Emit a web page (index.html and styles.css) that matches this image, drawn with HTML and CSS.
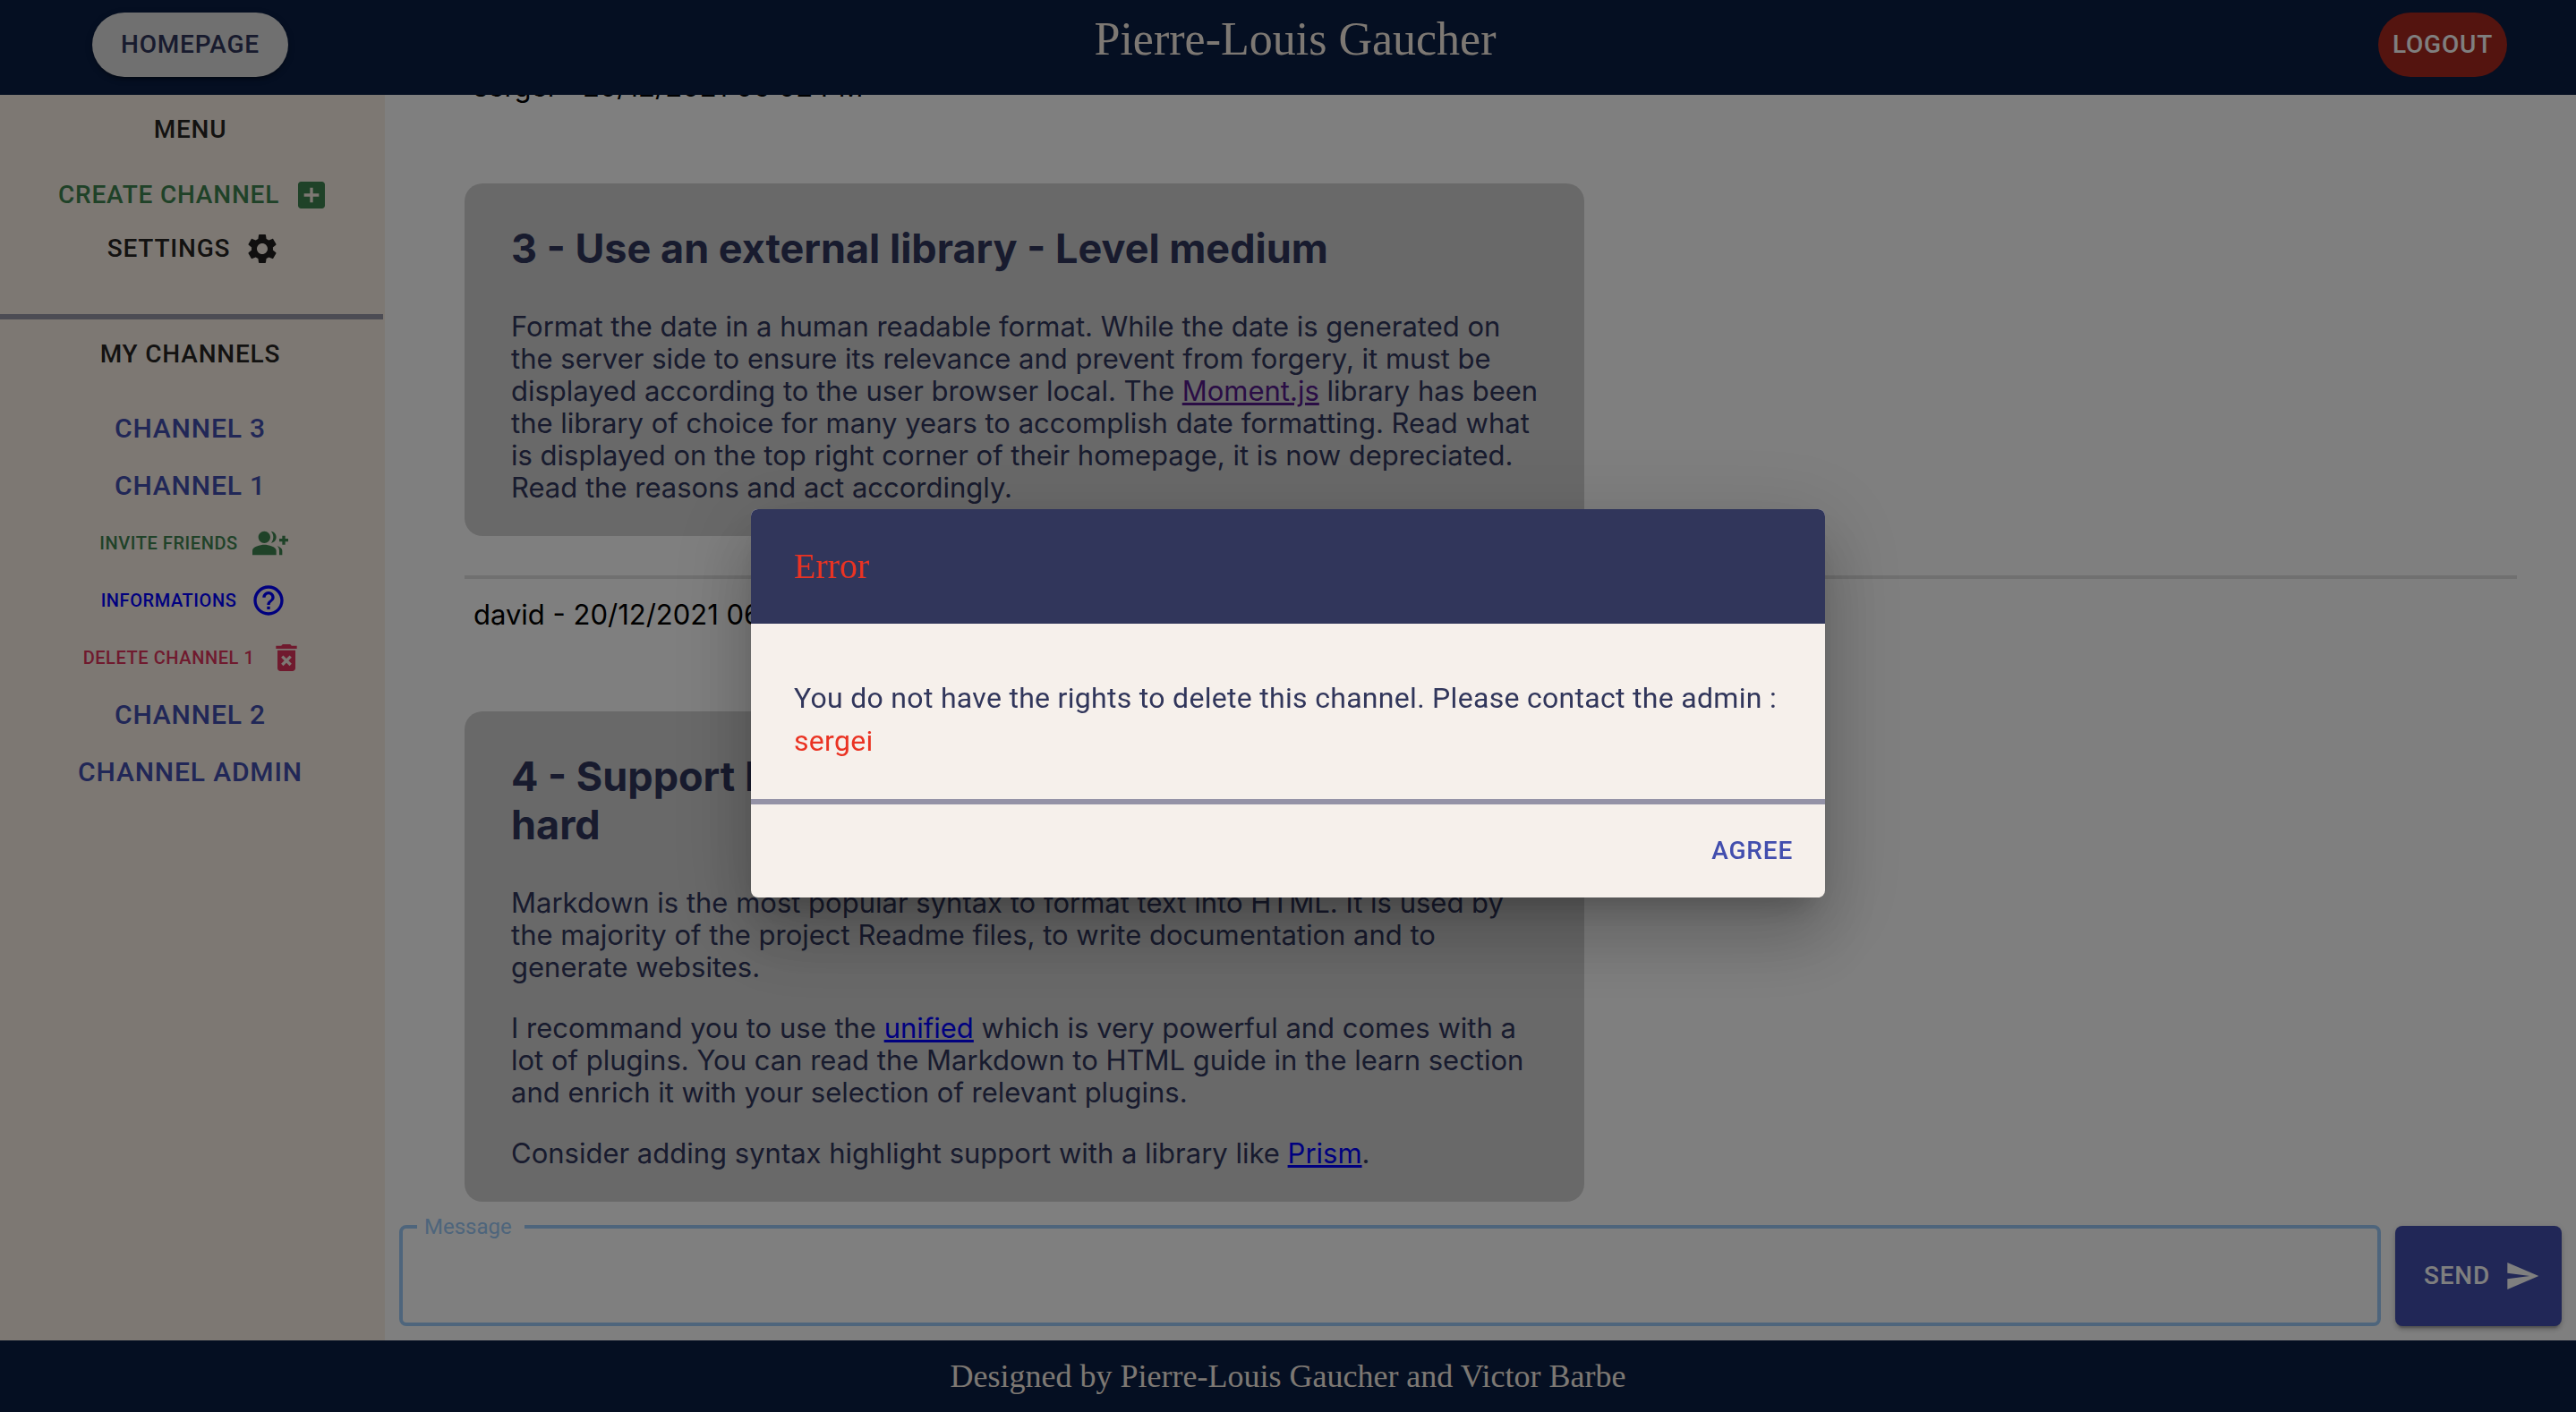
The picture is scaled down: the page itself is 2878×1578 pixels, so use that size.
FILE: index.html
```html
<!DOCTYPE html>
<html lang="en">
<head>
<meta charset="utf-8">
<meta name="viewport" content="width=device-width, initial-scale=1">
<title>Channels</title>
<link rel="stylesheet" href="styles.css">
</head>
<body>
<div class="app">
  <header class="header">
    <button class="btn btn-home" type="button">Homepage</button>
    <h1 class="title">Pierre-Louis Gaucher</h1>
    <button class="btn btn-logout" type="button">Logout</button>
  </header>

  <div class="body">
    <nav class="sidebar">
      <section class="menu">
        <h2 class="side-title">Menu</h2>
        <button class="btn item create" type="button">Create channel
          <svg class="icon" viewBox="0 0 24 24"><path d="M19 3H5c-1.11 0-2 .9-2 2v14c0 1.1.89 2 2 2h14c1.1 0 2-.9 2-2V5c0-1.1-.9-2-2-2zm-2 10h-4v4h-2v-4H7v-2h4V7h2v4h4v2z"/></svg>
        </button>
        <button class="btn item" type="button">Settings
          <svg class="icon" viewBox="0 0 24 24"><path d="M19.14 12.94c.04-.3.06-.61.06-.94 0-.32-.02-.64-.07-.94l2.03-1.58c.18-.14.23-.41.12-.61l-1.92-3.32c-.12-.22-.37-.29-.59-.22l-2.39.96c-.5-.38-1.03-.7-1.62-.94l-.36-2.54c-.04-.24-.24-.41-.48-.41h-3.84c-.24 0-.43.17-.47.41l-.36 2.54c-.59.24-1.13.57-1.62.94l-2.39-.96c-.22-.08-.47 0-.59.22L2.74 8.87c-.12.21-.08.47.12.61l2.03 1.58c-.05.3-.09.63-.09.94s.02.64.07.94l-2.03 1.58c-.18.14-.23.41-.12.61l1.92 3.32c.12.22.37.29.59.22l2.39-.96c.5.38 1.03.7 1.62.94l.36 2.54c.05.24.24.41.48.41h3.84c.24 0 .44-.17.47-.41l.36-2.54c.59-.24 1.13-.56 1.62-.94l2.39.96c.22.08.47 0 .59-.22l1.92-3.32c.12-.22.07-.47-.12-.61l-2.01-1.58zM12 15.6c-1.98 0-3.6-1.62-3.6-3.6s1.62-3.6 3.6-3.6 3.6 1.62 3.6 3.6-1.62 3.6-3.6 3.6z"/></svg>
        </button>
      </section>
      <section class="channels">
        <h2 class="side-title">My channels</h2>
        <ul class="channel-list">
          <li><a class="channel" href="#channel-3">Channel 3</a></li>
          <li><a class="channel" href="#channel-1">Channel 1</a></li>
          <li><button class="btn action invite" type="button">Invite friends
            <svg class="icon" viewBox="0 0 24 24"><path d="M22 9V7h-2v2h-2v2h2v2h2v-2h2V9zM8 12c2.21 0 4-1.79 4-4s-1.79-4-4-4-4 1.79-4 4 1.79 4 4 4zm0 1c-2.67 0-8 1.34-8 4v3h16v-3c0-2.66-5.33-4-8-4zm4.51-8.95C13.43 5.11 14 6.49 14 8s-.57 2.89-1.49 3.95C14.47 11.7 16 10.04 16 8s-1.53-3.7-3.49-3.95zm4.02 9.78C17.42 14.66 18 15.7 18 17v3h2v-3c0-1.45-1.59-2.51-3.47-3.17z"/></svg>
          </button></li>
          <li><button class="btn action info" type="button">Informations
            <svg class="icon" viewBox="0 0 24 24"><path d="M11 18h2v-2h-2v2zm1-16C6.48 2 2 6.48 2 12s4.48 10 10 10 10-4.48 10-10S17.52 2 12 2zm0 18c-4.41 0-8-3.59-8-8s3.59-8 8-8 8 3.59 8 8-3.59 8-8 8zm0-14c-2.21 0-4 1.79-4 4h2c0-1.1.9-2 2-2s2 .9 2 2c0 2-3 1.75-3 5h2c0-2.25 3-2.5 3-5 0-2.21-1.79-4-4-4z"/></svg>
          </button></li>
          <li><button class="btn action delete" type="button">Delete Channel 1
            <svg class="icon" viewBox="0 0 24 24"><path d="M6 19c0 1.1.9 2 2 2h8c1.1 0 2-.9 2-2V7H6v12zm2.46-7.12 1.41-1.41L12 12.59l2.12-2.12 1.41 1.41L13.41 14l2.12 2.12-1.41 1.41L12 15.41l-2.12 2.12-1.41-1.41L10.59 14l-2.13-2.12zM15.5 4l-1-1h-5l-1 1H5v2h14V4z"/></svg>
          </button></li>
          <li><a class="channel" href="#channel-2">Channel 2</a></li>
          <li><a class="channel" href="#channel-admin">Channel admin</a></li>
        </ul>
      </section>
    </nav>

    <main class="main">
      <div class="messages">
        <article class="message">
          <p class="author">sergei - 20/12/2021 06:02 PM</p>
          <div class="card">
            <h2>3 - Use an external library - Level medium</h2>
            <p>Format the date in a human readable format. While the date is generated on the server side to ensure its relevance and prevent from forgery, it must be displayed according to the user browser local. The <a class="visited" href="#moment">Moment.js</a> library has been the library of choice for many years to accomplish date formatting. Read what is displayed on the top right corner of their homepage, it is now depreciated. Read the reasons and act accordingly.</p>
          </div>
        </article>
        <article class="message">
          <p class="author">david - 20/12/2021 06:02 PM</p>
          <div class="card">
            <h2>4 - Support Markdown syntax in messages - Level hard</h2>
            <p>Markdown is the most popular syntax to format text into HTML. It is used by the majority of the project Readme files, to write documentation and to generate websites.</p>
            <p>I recommand you to use the <a href="#unified">unified</a> which is very powerful and comes with a lot of plugins. You can read the Markdown to HTML guide in the learn section and enrich it with your selection of relevant plugins.</p>
            <p>Consider adding syntax highlight support with a library like <a href="#prism">Prism</a>.</p>
          </div>
        </article>
      </div>
      <form class="composer">
        <fieldset class="field">
          <legend><label for="message">Message</label></legend>
          <textarea id="message"></textarea>
        </fieldset>
        <button class="btn btn-send" type="button">Send
          <svg class="icon" viewBox="0 0 24 24"><path d="M2.01 21 23 12 2.01 3 2 10l15 2-15 2z"/></svg>
        </button>
      </form>
    </main>
  </div>

  <footer class="footer">Designed by Pierre-Louis Gaucher and Victor Barbe</footer>
</div>

<div class="backdrop">
  <div class="dialog" role="alertdialog" aria-modal="true" aria-labelledby="dialog-title" aria-describedby="dialog-text">
    <h2 class="dialog-title" id="dialog-title">Error</h2>
    <p class="dialog-text" id="dialog-text">You do not have the rights to delete this channel. Please contact the admin : <span class="admin">sergei</span></p>
    <div class="dialog-actions">
      <button class="btn btn-agree" type="button">Agree</button>
    </div>
  </div>
</div>
</body>
</html>
```
FILE: styles.css
```css
* {
  box-sizing: border-box;
}

html,
body {
  height: 100%;
  margin: 0;
}

body {
  font-family: Inter, "Liberation Sans", sans-serif;
  font-size: 31px;
  line-height: 36px;
  color: #000;
  background: #fff;
}

h1,
h2,
p,
ul {
  margin: 0;
  padding: 0;
}

.app {
  display: flex;
  flex-direction: column;
  height: 100vh;
}

/* Buttons */
.btn {
  display: inline-flex;
  align-items: center;
  justify-content: center;
  margin: 0;
  border: 0;
  padding: 12px 16px;
  background: none;
  color: rgba(0, 0, 0, 0.87);
  font-family: Roboto, sans-serif;
  font-size: 28px;
  font-weight: 500;
  line-height: 48px;
  letter-spacing: 0.02857em;
  text-transform: uppercase;
  cursor: pointer;
}

.icon {
  width: 40px;
  height: 40px;
  margin: 0 -8px 0 16px;
  fill: currentColor;
}

/* Header and footer */
.header {
  display: grid;
  grid-template-columns: 1fr auto 1fr;
  align-items: start;
  flex: none;
  height: 106px;
  padding: 14px 77px 0 103px;
  background: #0a1e44;
}

.btn-home {
  justify-self: start;
  padding: 12px 32px;
  border-radius: 36px;
  background: #e0e0e0;
  color: #30365c;
  box-shadow: 0 6px 2px -4px rgba(0, 0, 0, 0.2), 0 4px 4px rgba(0, 0, 0, 0.14), 0 2px 10px rgba(0, 0, 0, 0.12);
}

.btn-logout {
  justify-self: end;
  border-radius: 36px;
  background: #a8281e;
  color: #fff;
}

.title {
  padding-right: 10px;
  color: #faf0e6;
  font-family: "Liberation Serif", serif;
  font-size: 52px;
  font-weight: 400;
  line-height: 60px;
}

.footer {
  flex: none;
  padding: 20px 0;
  background: #0a1e44;
  color: #faf0e6;
  font-family: "Liberation Serif", serif;
  font-size: 36px;
  line-height: 40px;
  text-align: center;
}

.body {
  display: flex;
  flex: 1;
  min-height: 0;
}

/* Sidebar */
.sidebar {
  flex: none;
  width: 430px;
  background: #faf0e6;
}

.menu,
.channels {
  display: flex;
  flex-direction: column;
  align-items: center;
  width: 428px;
  padding: 15px 3px 0 0;
}

.menu {
  height: 251px;
  border-bottom: 6px solid #9898a8;
}

.side-title {
  color: rgba(0, 0, 0, 0.87);
  font-family: Roboto, sans-serif;
  font-size: 28px;
  font-weight: 500;
  line-height: 48px;
  letter-spacing: 0.02857em;
  text-transform: uppercase;
}

.menu .side-title {
  margin-bottom: 19px;
}

.item {
  padding: 6px 16px;
}

.create {
  color: #3f8450;
}

.channel-list {
  display: flex;
  flex-direction: column;
  align-items: center;
  margin-top: 27px;
  list-style: none;
}

.channel-list li {
  display: flex;
}

.channel {
  color: #424eae;
  font-family: Roboto, sans-serif;
  font-size: 30px;
  font-weight: 500;
  line-height: 64px;
  letter-spacing: 0.02857em;
  text-decoration: none;
  text-transform: uppercase;
}

.action {
  padding: 8px 16px;
  font-size: 20px;
}

.invite {
  color: #3f8450;
}

.info {
  color: #00f;
}

.delete {
  color: #e0345c;
}

/* Messages */
.main {
  display: flex;
  flex: 1;
  flex-direction: column;
  min-width: 0;
}

.messages {
  display: flex;
  flex: 1;
  flex-direction: column;
  justify-content: flex-end;
  min-height: 0;
  padding: 0 66px 0 89px;
  overflow: hidden;
}

.message + .message {
  margin-top: 44px;
  border-top: 4px solid #e0e0e0;
}

.author {
  padding: 22px 10px 90px;
}

.card {
  width: 1251px;
  max-width: 100%;
  padding: 46px 44px 36px 52px;
  border-radius: 20px;
  background: #d3d3d3;
  color: #30365c;
}

.card h2 {
  margin-bottom: 42px;
  font-size: 45px;
  font-weight: 700;
  line-height: 54px;
}

.card p + p {
  margin-top: 32px;
}

.card a {
  color: #00f;
}

.card .visited {
  color: #551a8b;
}

/* Composer */
.composer {
  display: flex;
  flex: none;
  align-items: flex-end;
  gap: 16px;
  padding: 14px 16px 16px;
}

.field {
  display: flex;
  flex: 1;
  height: 125px;
  margin: 0;
  border: 4px solid #9ccbf8;
  border-radius: 8px;
  padding: 0 16px;
}

.field legend {
  padding: 0 14px 0 8px;
  color: #9ccbf8;
  font-family: Roboto, sans-serif;
  font-size: 24px;
  line-height: 28px;
}

.field textarea {
  flex: 1;
  border: 0;
  padding: 16px 12px;
  outline: 0;
  background: none;
  color: inherit;
  font: inherit;
  resize: none;
}

.btn-send {
  height: 112px;
  padding: 0 32px;
  border-radius: 8px;
  background: #424eae;
  color: #fff;
  box-shadow: 0 6px 2px -4px rgba(0, 0, 0, 0.2), 0 4px 4px rgba(0, 0, 0, 0.14), 0 2px 10px rgba(0, 0, 0, 0.12);
}

/* Dialog */
.backdrop {
  position: fixed;
  inset: 0;
  display: flex;
  align-items: center;
  justify-content: center;
  background: rgba(0, 0, 0, 0.5);
}

.dialog {
  width: 1200px;
  max-width: calc(100% - 128px);
  margin-top: -6px;
  border-radius: 8px;
  overflow: hidden;
  background: #f6f0eb;
  box-shadow: 0 22px 30px -14px rgba(0, 0, 0, 0.2), 0 48px 76px 6px rgba(0, 0, 0, 0.14), 0 18px 92px 16px rgba(0, 0, 0, 0.12);
}

.dialog-title {
  padding: 32px 48px;
  background: #31365b;
  color: #ea3323;
  font-family: "Liberation Serif", serif;
  font-size: 40px;
  font-weight: 400;
  line-height: 64px;
}

.dialog-text {
  padding: 59px 48px 41px;
  border-bottom: 6px solid #9492a6;
  color: #31365b;
  font-family: Roboto, sans-serif;
  font-size: 32px;
  line-height: 48px;
  letter-spacing: 0.00938em;
}

.admin {
  color: #ea3323;
}

.dialog-actions {
  display: flex;
  justify-content: flex-end;
  padding: 16px 20px;
}

.btn-agree {
  color: #424eae;
}
```
